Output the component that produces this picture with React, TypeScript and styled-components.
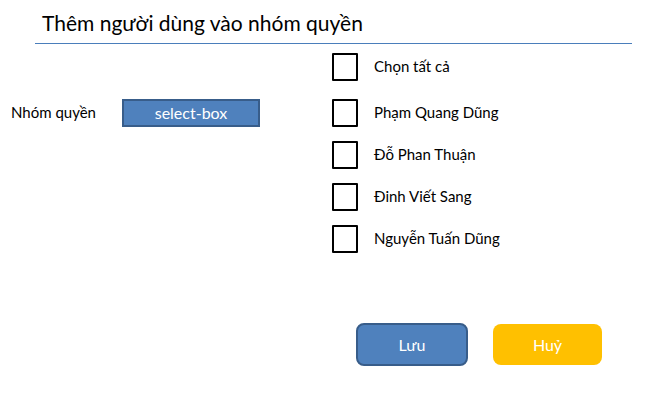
import React, { useState } from 'react';
import styled, { createGlobalStyle } from 'styled-components';

const GlobalStyle = createGlobalStyle`
  *, *::before, *::after { box-sizing: border-box; }
  body {
    margin: 0;
    background: #fff;
    color: #000;
    font: 15px/20px Lato, "Open Sans", sans-serif;
  }
`;

const Page = styled.main`
  padding: 8px 15px 40px 11px;
`;

const Header = styled.header`
  margin-left: 24px;
  padding: 0 7px 5px;
  border-bottom: 1px solid #4a7ebb;
`;

const Title = styled.h1`
  margin: 0;
  font-size: 21px;
  line-height: 30px;
  font-weight: 400;
`;

const Columns = styled.div`
  display: grid;
  grid-template-columns: 1fr 300px;
  align-items: start;
  padding-top: 9px;
`;

const Field = styled.div`
  display: grid;
  grid-template-columns: 111px 138px;
  align-items: center;
  padding-top: 46px;
`;

const FieldLabel = styled.label`
  padding-bottom: 2px;
`;

const Select = styled.select`
  appearance: none;
  height: 28px;
  padding: 0 8px;
  border: 2px solid #385d8a;
  border-radius: 0;
  background: #4f81bd;
  color: #fff;
  font: inherit;
  font-size: 16px;
  text-align: center;
  text-align-last: center;
`;

const CheckList = styled.fieldset`
  display: grid;
  gap: 14px;
  margin: 0;
  padding: 0;
  border: 0;
`;

const CheckRow = styled.label<{ $lead?: boolean }>`
  display: flex;
  align-items: center;
  gap: 16px;
  margin-bottom: ${p => (p.$lead ? 4 : 0)}px;
`;

const CheckText = styled.span`
  padding-bottom: 2px;
`;

const Checkbox = styled.input`
  appearance: none;
  display: grid;
  place-items: center;
  width: 26px;
  height: 28px;
  margin: 0;
  border: 2px solid #000;
  border-radius: 1px;
  background: #fff;

  &:checked::before {
    content: "";
    width: 14px;
    height: 14px;
    background: #4f81bd;
  }
`;

const Actions = styled.div`
  display: flex;
  justify-content: flex-end;
  align-items: center;
  gap: 25px;
  padding: 70px 30px 0 0;
`;

const Button = styled.button<{ $primary?: boolean }>`
  width: ${p => (p.$primary ? 112 : 109)}px;
  height: ${p => (p.$primary ? 43 : 41)}px;
  padding: 0;
  border: ${p => (p.$primary ? '2px solid #385d8a' : '0')};
  border-radius: 8px;
  background: ${p => (p.$primary ? '#4f81bd' : '#ffc000')};
  color: #fff;
  font: inherit;
  font-size: 16px;
`;

const users = ['Phạm Quang Dũng', 'Đỗ Phan Thuận', 'Đinh Viết Sang', 'Nguyễn Tuấn Dũng'];

export default function App() {
  const [selected, setSelected] = useState<string[]>([]);

  const toggle = (user: string) =>
    setSelected(current =>
      current.includes(user) ? current.filter(name => name !== user) : [...current, user],
    );

  return (
    <>
      <GlobalStyle />
      <Page>
        <Header>
          <Title>Thêm người dùng vào nhóm quyền</Title>
        </Header>
        <Columns>
          <Field>
            <FieldLabel htmlFor="group">Nhóm quyền</FieldLabel>
            <Select id="group">
              <option>select-box</option>
            </Select>
          </Field>
          <CheckList>
            <CheckRow $lead>
              <Checkbox
                type="checkbox"
                checked={selected.length === users.length}
                onChange={event => setSelected(event.target.checked ? users : [])}
              />
              <CheckText>Chọn tất cả</CheckText>
            </CheckRow>
            {users.map(user => (
              <CheckRow key={user}>
                <Checkbox
                  type="checkbox"
                  checked={selected.includes(user)}
                  onChange={() => toggle(user)}
                />
                <CheckText>{user}</CheckText>
              </CheckRow>
            ))}
          </CheckList>
        </Columns>
        <Actions>
          <Button type="button" $primary>Lưu</Button>
          <Button type="button">Huỷ</Button>
        </Actions>
      </Page>
    </>
  );
}
